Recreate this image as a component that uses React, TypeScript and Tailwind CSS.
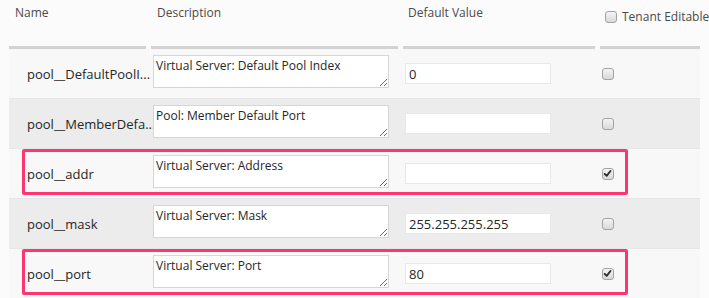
import React from "react";

type Row = {
  name: string;
  desc: string;
  value: string;
  checked: boolean;
  highlight: boolean;
};

const rows: Row[] = [
  { name: "pool__DefaultPoolI...", desc: "Virtual Server: Default Pool Index", value: "0", checked: false, highlight: false },
  { name: "pool__MemberDefa...", desc: "Pool: Member Default Port", value: "", checked: false, highlight: false },
  { name: "pool__addr", desc: "Virtual Server: Address", value: "", checked: true, highlight: true },
  { name: "pool__mask", desc: "Virtual Server: Mask", value: "255.255.255.255", checked: false, highlight: false },
  { name: "pool__port", desc: "Virtual Server: Port", value: "80", checked: true, highlight: true },
];

function Box({ checked }: { checked: boolean }) {
  return (
    <span className="relative block shrink-0 w-[12px] h-[12px] rounded-[3px] border border-[#a3a3a3] bg-gradient-to-b from-[#f4f4f4] to-[#d9d9d9]">
      {checked && (
        <svg viewBox="0 0 12 12" className="absolute left-[0px] top-[0px] w-[10px] h-[10px]">
          <path d="M2 5.8 L4.4 8.2 L9 2.4" fill="none" stroke="#2a2a2a" strokeWidth="2.2" strokeLinecap="round" strokeLinejoin="round" />
        </svg>
      )}
    </span>
  );
}

export default function App() {
  return (
    <div
      className="w-[709px] h-[298px] overflow-hidden bg-[#fbfbfb] text-[12px] text-[#262626]"
      style={{ fontFamily: "'Open Sans', 'Noto Sans', sans-serif" }}
    >
      <div className="ml-[9px] w-[691px]">
        {/* header */}
        <div className="grid grid-cols-[137px_247px_192px_100px] gap-x-[5px] h-[49px]">
          <div className="border-b-[3px] border-[#d2d2d2] pl-[6px] pt-[5px] leading-[16px] text-[#4a4a4a]">Name</div>
          <div className="border-b-[3px] border-[#d2d2d2] pl-[6px] pt-[5px] leading-[16px] text-[#4a4a4a]">Description</div>
          <div className="border-b-[3px] border-[#d2d2d2] pl-[5px] pt-[5px] leading-[16px] text-[#4a4a4a]">Default Value</div>
          <div className="border-b-[3px] border-[#d2d2d2] pl-[5px] pt-[9px] leading-[16px] text-[#4a4a4a]">
            <div className="flex items-center gap-[5px] whitespace-nowrap">
              <Box checked={false} />
              <span>Tenant Editable</span>
            </div>
          </div>
        </div>
        {/* rows */}
        {rows.map((r, i) => (
          <div
            key={i}
            className={`relative grid grid-cols-[137px_247px_192px_100px] gap-x-[5px] h-[50px] border-b border-[#e6e6e6] ${
              i % 2 === 1 ? "bg-[#ececec]" : "bg-[#f8f8f8]"
            }`}
          >
            <div className="flex items-center pl-[18px] whitespace-nowrap text-[13px] leading-[18px]">{r.name}</div>
            <div className="pl-[2px] pt-[6px]">
              <textarea
                readOnly
                defaultValue={r.desc}
                className="block w-[236px] h-[33px] border border-[#d6d6d6] bg-white p-[2px] text-[12px] leading-[16px] text-[#262626] outline-none"
                style={{ fontFamily: "'Open Sans', 'Noto Sans', sans-serif" }}
              />
            </div>
            <div className="flex items-center pl-[2px]">
              <input
                readOnly
                defaultValue={r.value}
                className="block w-[146px] h-[21px] border border-[#e8e8e8] bg-white px-[3px] text-[13px] text-[#262626] outline-none"
                style={{ fontFamily: "'Open Sans', 'Noto Sans', sans-serif" }}
              />
            </div>
            <div className="flex items-center pl-[2px]">
              <Box checked={r.checked} />
            </div>
            {r.highlight && (
              <div className="absolute left-[13px] top-[0px] w-[606px] h-[46px] border-[3px] border-[#fd3571] rounded-[2px] pointer-events-none" />
            )}
          </div>
        ))}
      </div>
    </div>
  );
}
